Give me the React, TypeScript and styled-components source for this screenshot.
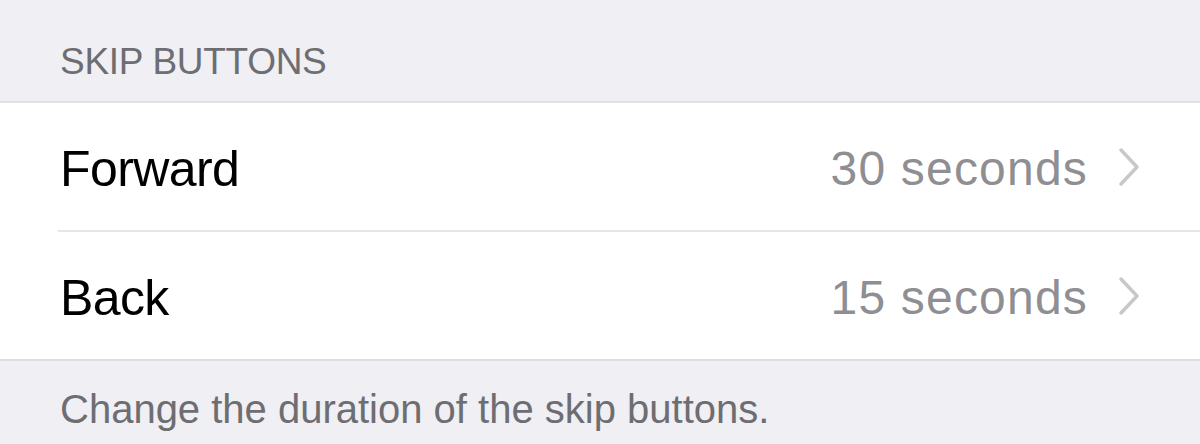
import React from 'react';
import styled, { createGlobalStyle } from 'styled-components';

const GlobalStyle = createGlobalStyle`
  html, body {
    margin: 0;
    padding: 0;
    background: #efeff4;
  }
  body {
    font-family: "Liberation Sans", Arial, sans-serif;
    -webkit-font-smoothing: antialiased;
  }
`;

const Page = styled.div`
  width: 1200px;
  height: 444px;
  overflow: hidden;
  background: #efeff4;
`;

const SectionHeader = styled.div`
  height: 103px;
  box-sizing: border-box;
  padding: 40px 0 0 60px;
  font-size: 37px;
  line-height: 44px;
  color: #6d6d72;
  letter-spacing: -0.3px;
  border-bottom: 2px solid #e0e0e5;
`;

const Group = styled.div`
  background: #ffffff;
  border-bottom: 2px solid #dcdce1;
`;

const Row = styled.div<{ last?: boolean }>`
  box-sizing: border-box;
  display: flex;
  align-items: center;
  margin-left: 58px;
  padding-right: 60px;
  height: ${(p) => (p.last ? '127px' : '129px')};
  border-bottom: ${(p) => (p.last ? 'none' : '2px solid #e6e6e9')};
`;

const Label = styled.span`
  flex: 1;
  font-size: 50px;
  letter-spacing: -0.6px;
  color: #000000;
  padding-left: 2px;
  padding-top: 4px;
`;

const Value = styled.span`
  font-size: 48px;
  letter-spacing: 1.2px;
  color: #8e8e93;
  margin-right: 30px;
  padding-top: 4px;
`;

const ChevronIcon = styled.svg`
  display: block;
  flex: none;
`;

const Chevron = () => (
  <ChevronIcon width="22" height="40" viewBox="0 0 22 40">
    <path d="M3 3 L19 20 L3 37" fill="none" stroke="#c7c7cc" strokeWidth="3.5" strokeLinecap="round" strokeLinejoin="round" />
  </ChevronIcon>
);

const Footer = styled.div`
  padding: 26px 0 0 60px;
  font-size: 40px;
  line-height: 44px;
  color: #6d6d72;
`;

const App: React.FC = () => {
  return (
    <Page>
      <GlobalStyle />
      <SectionHeader>SKIP BUTTONS</SectionHeader>
      <Group>
        <Row>
          <Label>Forward</Label>
          <Value>30 seconds</Value>
          <Chevron />
        </Row>
        <Row last>
          <Label>Back</Label>
          <Value>15 seconds</Value>
          <Chevron />
        </Row>
      </Group>
      <Footer>Change the duration of the skip buttons.</Footer>
    </Page>
  );
};

export default App;
